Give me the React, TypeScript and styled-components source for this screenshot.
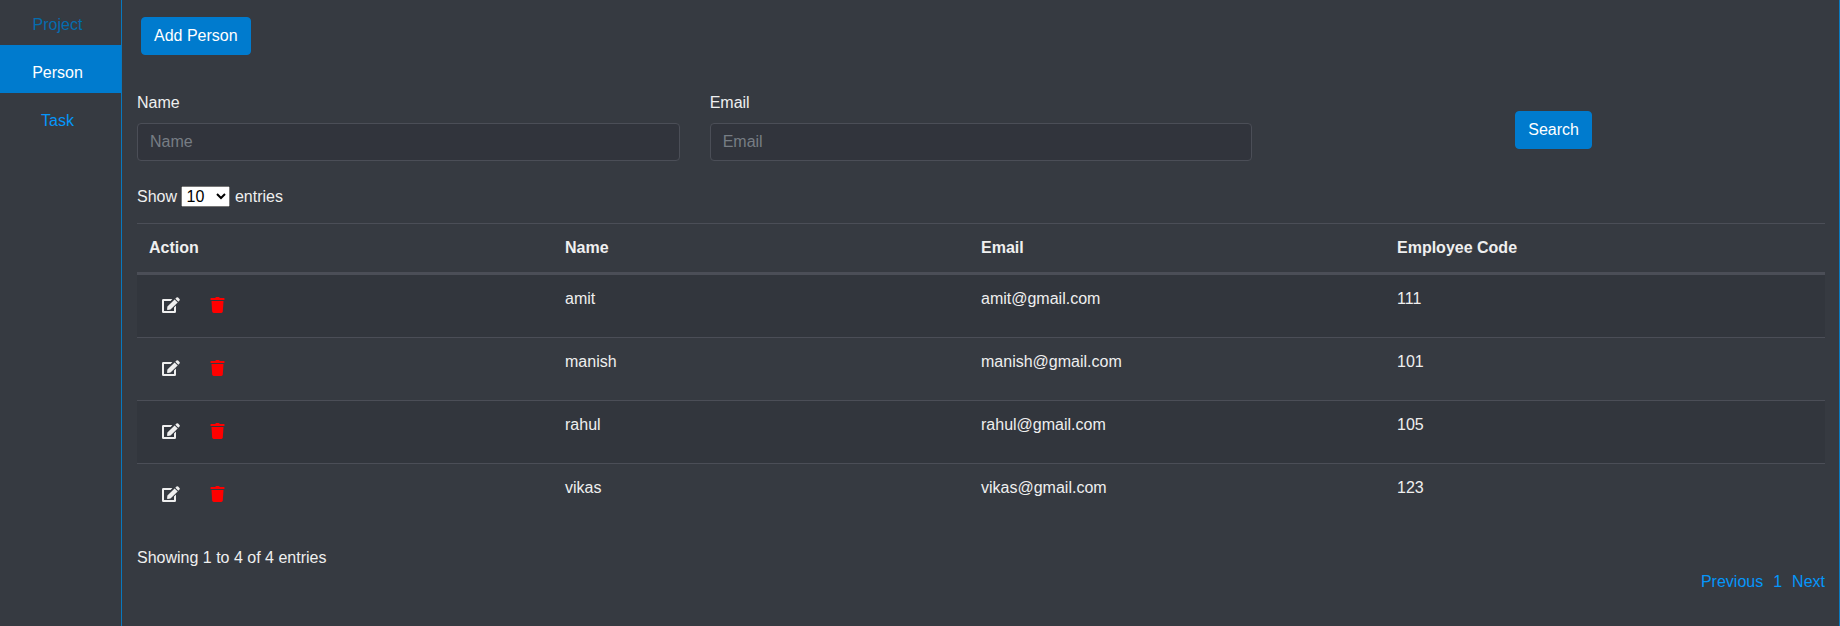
import React from "react";
import styled, { createGlobalStyle } from "styled-components";

const colors = {
  background: "#363a41",
  stripe: "#32363d",
  field: "#31343c",
  line: "#4b4e57",
  text: "#efefef",
  primary: "#007bce",
  link: "#0596fa",
  linkMuted: "#056cae",
  frame: "#0878be",
  danger: "#ff0000",
};

const GlobalStyle = createGlobalStyle`
  *, *::before, *::after { box-sizing: border-box; }
  body {
    margin: 0;
    background: ${colors.background};
    color: ${colors.text};
    font: 16px/24px "Liberation Sans", Arial, sans-serif;
    overflow: hidden;
  }
`;

const Page = styled.div`
  display: flex;
  height: 626px;
`;

const Sidebar = styled.nav`
  flex: none;
  width: 121px;
  display: flex;
  flex-direction: column;
`;

const NavItem = styled.a<{ $state?: "active" | "muted"; $first?: boolean }>`
  height: ${(p) => (p.$first ? 45 : 48)}px;
  padding: ${(p) => (p.$first ? 13 : 16)}px 6px 8px 0;
  text-align: center;
  text-decoration: none;
  background: ${(p) => (p.$state === "active" ? colors.primary : "transparent")};
  color: ${(p) =>
    p.$state === "active" ? "#fff" : p.$state === "muted" ? colors.linkMuted : colors.link};
`;

const Content = styled.main`
  flex: 1;
  border: solid ${colors.frame};
  border-width: 0 1px;
  padding: 17px 14px 0 15px;
`;

const Button = styled.button`
  height: 38px;
  padding: 6px 12px;
  border: 1px solid ${colors.primary};
  border-radius: 4px;
  background: ${colors.primary};
  color: #fff;
  font: inherit;
`;

const Toolbar = styled.div`
  padding-left: 4px;
  height: 38px;
  display: flex;
`;

const Filters = styled.div`
  display: grid;
  grid-template-columns: repeat(3, 542.67px);
  column-gap: 30px;
  margin-top: 36px;
  height: 70px;
`;

const Field = styled.label`
  display: flex;
  flex-direction: column;
  gap: 8px;
`;

const Input = styled.input`
  height: 38px;
  padding: 6px 12px;
  border: 1px solid ${colors.line};
  border-radius: 4px;
  background: ${colors.field};
  color: ${colors.text};
  font: inherit;
  &::placeholder { color: #777d84; opacity: 1; }
`;

const SearchCell = styled.div`
  text-align: center;
  padding-top: 20px;
`;

const LengthControl = styled.label`
  display: block;
  height: 24px;
  margin-top: 24px;
`;

const Select = styled.select`
  font: inherit;
  line-height: normal;
  margin: 0;
`;

const Table = styled.table`
  width: 1688px;
  margin-top: 14px;
  table-layout: fixed;
  border-collapse: separate;
  border-spacing: 0;
`;

const HeadCell = styled.th<{ $width: number }>`
  width: ${(p) => p.$width}px;
  padding: 12px;
  text-align: left;
  border-top: 1px solid ${colors.line};
  border-bottom: 2px solid ${colors.line};
`;

const Row = styled.tr`
  &:nth-child(odd) { background: ${colors.stripe}; }
`;

const Cell = styled.td`
  height: 63px;
  padding: 12px;
  vertical-align: top;
  border-top: 1px solid ${colors.line};
`;

const Actions = styled.div`
  display: flex;
  gap: 4px;
`;

const IconButton = styled.button<{ $danger?: boolean }>`
  height: 38px;
  display: flex;
  align-items: center;
  padding: 0 13px 2px;
  border: 0;
  background: none;
  color: ${(p) => (p.$danger ? colors.danger : colors.text)};
`;

const Info = styled.div`
  margin-top: 20px;
`;

const Pagination = styled.div`
  display: flex;
  justify-content: flex-end;
  gap: 10px;
`;

const PageLink = styled.a`
  color: ${colors.link};
`;

const EditIcon = () => (
  <svg width="18" height="16" viewBox="0 0 18 16" fill="currentColor">
    <path d="M1.3 2H10.4L8.6 4H2V14H12V10.6L14 8.6V14.7Q14 16 12.7 16H1.3Q0 16 0 14.7V3.3Q0 2 1.3 2Z" />
    <path d="M12.6 2.4L15.7 5.5L8.5 12.6L5.8 12.95Q5 13 5.1 12.2L5.4 9.6Z" />
    <path d="M13.3 1.7L14.5 .5Q15.3-.2 16.1 .5L17.5 1.9Q18.2 2.7 17.5 3.5L16.3 4.7Z" />
  </svg>
);

const TrashIcon = () => (
  <svg width="15" height="16" viewBox="0 0 15 16" fill="currentColor">
    <path d="M5.2 1L5.5 .4Q5.7 0 6.2 0H8.8Q9.3 0 9.5 .4L9.8 1H14Q14.5 1 14.5 1.5V2.5Q14.5 3 14 3H1Q.5 3 .5 2.5V1.5Q.5 1 1 1Z" />
    <path d="M1.5 4H13.5L12.8 14.6Q12.7 16 11.3 16H3.7Q2.3 16 2.2 14.6Z" />
  </svg>
);

const columns = [
  { title: "Action", width: 416 },
  { title: "Name", width: 416 },
  { title: "Email", width: 416 },
  { title: "Employee Code", width: 440 },
];

const people = [
  { name: "amit", email: "amit@gmail.com", code: "111" },
  { name: "manish", email: "manish@gmail.com", code: "101" },
  { name: "rahul", email: "rahul@gmail.com", code: "105" },
  { name: "vikas", email: "vikas@gmail.com", code: "123" },
];

export default function App() {
  return (
    <>
      <GlobalStyle />
      <Page>
        <Sidebar>
          <NavItem $state="muted" $first>Project</NavItem>
          <NavItem $state="active">Person</NavItem>
          <NavItem>Task</NavItem>
        </Sidebar>
        <Content>
          <Toolbar>
            <Button>Add Person</Button>
          </Toolbar>
          <Filters>
            <Field>
              Name
              <Input placeholder="Name" />
            </Field>
            <Field>
              Email
              <Input placeholder="Email" />
            </Field>
            <SearchCell>
              <Button>Search</Button>
            </SearchCell>
          </Filters>
          <LengthControl>
            Show{" "}
            <Select defaultValue="10">
              <option>10</option>
              <option>25</option>
              <option>50</option>
              <option>100</option>
            </Select>{" "}
            entries
          </LengthControl>
          <Table>
            <thead>
              <tr>
                {columns.map((c) => (
                  <HeadCell key={c.title} $width={c.width}>{c.title}</HeadCell>
                ))}
              </tr>
            </thead>
            <tbody>
              {people.map((p) => (
                <Row key={p.name}>
                  <Cell>
                    <Actions>
                      <IconButton aria-label="Edit"><EditIcon /></IconButton>
                      <IconButton aria-label="Delete" $danger><TrashIcon /></IconButton>
                    </Actions>
                  </Cell>
                  <Cell>{p.name}</Cell>
                  <Cell>{p.email}</Cell>
                  <Cell>{p.code}</Cell>
                </Row>
              ))}
            </tbody>
          </Table>
          <Info>Showing 1 to 4 of 4 entries</Info>
          <Pagination>
            <PageLink>Previous</PageLink>
            <PageLink>1</PageLink>
            <PageLink>Next</PageLink>
          </Pagination>
        </Content>
      </Page>
    </>
  );
}
